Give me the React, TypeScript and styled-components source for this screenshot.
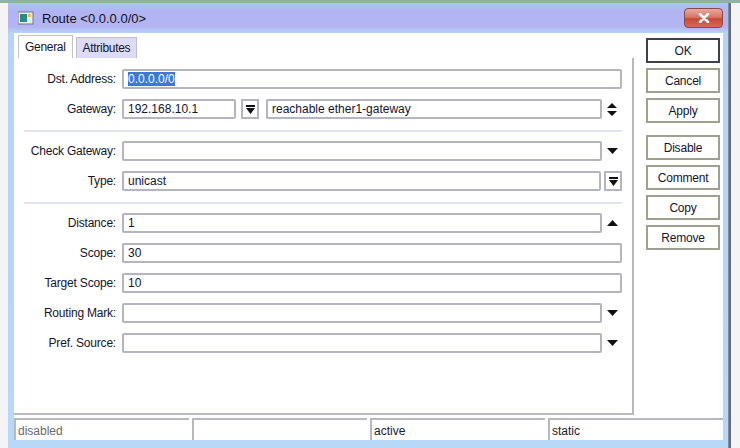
import styled, { createGlobalStyle } from "styled-components"

const Global = createGlobalStyle`
  body {
    margin: 0;
    background: #ffffff;
    font-family: "Liberation Sans", Arial, sans-serif;
    font-size: 12px;
    color: #14142a;
  }
`

const Page = styled.div`
  width: 740px;
  height: 448px;
  overflow: hidden;
  display: flex;
  flex-direction: column;
`

const TopStrip = styled.div`
  height: 3px;
  background: #8fb3a2;
`

const Desk = styled.div`
  flex: 1;
  display: flex;
`

const Side = styled.div<{ $w: number }>`
  width: ${p => p.$w}px;
  background: #f4f4f6;
  border-left: ${p => (p.$w < 9 ? "0" : "2px solid #6a6a78")};
`

const Window = styled.div`
  flex: 1;
  display: flex;
  flex-direction: column;
  background: linear-gradient(#a6c8f2 0px, #b2b4f2 8px, #b4b4f4 24px, #b6d4f6 30px, #b8d8f8 100%);
  padding: 0 5px 8px 6px;
  border-right: 1px solid #7a8aa0;
`

const TitleBar = styled.div`
  height: 30px;
  display: flex;
  align-items: center;
  gap: 8px;
  padding-left: 4px;
  font-size: 13px;
  color: #101018;
`

const Close = styled.div`
  margin-left: auto;
  margin-top: -1px;
  width: 37px;
  height: 18px;
  border-radius: 4px;
  border: 1px solid #8a4a40;
  background: linear-gradient(#e8a8a0 0%, #d87868 45%, #c84838 55%, #d86a58 100%);
  display: flex;
  align-items: center;
  justify-content: center;
`

const Client = styled.div`
  flex: 1;
  background: #ffffff;
  display: flex;
  flex-direction: column;
`

const Main = styled.div`
  flex: 1;
  display: flex;
`

const Panel = styled.div`
  width: 620px;
  display: flex;
  flex-direction: column;
`

const Tabs = styled.div`
  display: flex;
  height: 25px;
  align-items: flex-end;
  padding-left: 4px;
  gap: 3px;
`

const Tab = styled.div<{ $active?: boolean }>`
  height: ${p => (p.$active ? 22 : 20)}px;
  padding: 0 6px;
  display: flex;
  align-items: center;
  border: 1px solid #c0c0cc;
  border-bottom: 0;
  background: ${p => (p.$active ? "#ffffff" : "#dcdcf8")};
  letter-spacing: -0.3px;
`

const Body = styled.div`
  flex: 1;
  border-right: 2px solid #b8b8c4;
  border-bottom: 2px solid #b8b8c4;
  padding: 11px 10px 0 0;
  display: flex;
  flex-direction: column;
  gap: 10px;
`

const Row = styled.div`
  display: flex;
  align-items: center;
  height: 20px;
`

const Label = styled.div`
  width: 102px;
  text-align: right;
  margin-right: 6px;
  letter-spacing: -0.2px;
  white-space: nowrap;
`

const Input = styled.div<{ $w?: number }>`
  ${p => (p.$w ? `width: ${p.$w}px;` : "flex: 1;")}
  height: 20px;
  box-sizing: border-box;
  border: 2px solid #b4b4c2;
  border-radius: 2px;
  padding: 0 4px;
  display: flex;
  align-items: center;
  white-space: nowrap;
  overflow: hidden;
`

const Selected = styled.span`
  background: #3a7ad6;
  color: #ffffff;
`

const Icon = styled.div`
  width: 20px;
  display: flex;
  justify-content: center;
  align-items: center;
`

const SmallBtn = styled.div`
  width: 18px;
  height: 20px;
  box-sizing: border-box;
  border: 2px solid #b4b4c2;
  margin-left: 3px;
  display: flex;
  justify-content: center;
  align-items: center;
`

const Sep = styled.div`
  height: 2px;
  background: #e2e2f6;
  margin: 1px 0 -1px 10px;
`

const Buttons = styled.div`
  width: 74px;
  margin-left: 12px;
  padding-top: 5px;
  display: flex;
  flex-direction: column;
  gap: 5px;
`

const Button = styled.div<{ $gap?: boolean; $default?: boolean }>`
  height: 25px;
  box-sizing: border-box;
  border: 2px solid ${p => (p.$default ? "#40404a" : "#a0a090")};
  display: flex;
  align-items: center;
  justify-content: center;
  margin-top: ${p => (p.$gap ? 7 : 0)}px;
  letter-spacing: -0.2px;
  color: #151530;
`

const Status = styled.div`
  height: 22px;
  margin-top: 3px;
  display: flex;
  gap: 3px;
`

const Cell = styled.div<{ $muted?: boolean }>`
  flex: 1;
  border-top: 2px solid #b8b8c4;
  border-left: 2px solid #b8b8c4;
  padding: 1px 0 0 2px;
  display: flex;
  align-items: center;
  color: ${p => (p.$muted ? "#6a6a6a" : "#1a1a2a")};
`

const Down = () => (
  <svg width="11" height="7" viewBox="0 0 11 7">
    <path d="M0 0h11L5.5 6z" fill="#111" />
  </svg>
)

const Up = () => (
  <svg width="11" height="7" viewBox="0 0 11 7">
    <path d="M0 6h11L5.5 0z" fill="#111" />
  </svg>
)

const UpDown = () => (
  <svg width="10" height="13" viewBox="0 0 10 13">
    <path d="M0 5h10L5 0z M0 8h10L5 13z" fill="#111" />
  </svg>
)

const BarDown = () => (
  <svg width="9" height="9" viewBox="0 0 9 9">
    <path d="M0 0h9v2H0z M0 3h9L4.5 9z" fill="#111" />
  </svg>
)

const Field = ({ label, children }: { label: string; children?: React.ReactNode }) => (
  <Row>
    <Label>{label}</Label>
    {children}
  </Row>
)

const App = () => {
  return (
    <Page>
      <Global />
      <TopStrip />
      <Desk>
        <Side $w={8} />
        <Window>
          <TitleBar>
            <svg width="16" height="14" viewBox="0 0 16 14">
              <rect x="0" y="1" width="15" height="12" fill="#e8eef4" stroke="#6a7a8a" />
              <rect x="2" y="3" width="7" height="8" fill="#2a8a8a" />
              <rect x="10" y="3" width="3" height="3" fill="#f0c040" />
            </svg>
            <span>Route &lt;0.0.0.0/0&gt;</span>
            <Close>
              <svg width="12" height="10" viewBox="0 0 12 10">
                <path d="M2 1l8 8M10 1l-8 8" stroke="#ffffff" strokeWidth="2.6" strokeLinecap="round" />
              </svg>
            </Close>
          </TitleBar>
          <Client>
            <Main>
              <Panel>
                <Tabs>
                  <Tab $active>General</Tab>
                  <Tab>Attributes</Tab>
                </Tabs>
                <Body>
                  <Field label="Dst. Address:">
                    <Input><Selected>0.0.0.0/0</Selected></Input>
                  </Field>
                  <Field label="Gateway:">
                    <Input $w={114}>192.168.10.1</Input>
                    <SmallBtn style={{ marginLeft: 5 }}><BarDown /></SmallBtn>
                    <Input style={{ marginLeft: 7 }}>reachable ether1-gateway</Input>
                    <Icon><UpDown /></Icon>
                  </Field>
                  <Sep />
                  <Field label="Check Gateway:">
                    <Input />
                    <Icon><Down /></Icon>
                  </Field>
                  <Field label="Type:">
                    <Input>unicast</Input>
                    <SmallBtn><BarDown /></SmallBtn>
                  </Field>
                  <Sep />
                  <Field label="Distance:">
                    <Input>1</Input>
                    <Icon><Up /></Icon>
                  </Field>
                  <Field label="Scope:">
                    <Input>30</Input>
                  </Field>
                  <Field label="Target Scope:">
                    <Input>10</Input>
                  </Field>
                  <Field label="Routing Mark:">
                    <Input />
                    <Icon><Down /></Icon>
                  </Field>
                  <Field label="Pref. Source:">
                    <Input />
                    <Icon><Down /></Icon>
                  </Field>
                </Body>
              </Panel>
              <Buttons>
                <Button $default>OK</Button>
                <Button>Cancel</Button>
                <Button>Apply</Button>
                <Button $gap>Disable</Button>
                <Button>Comment</Button>
                <Button>Copy</Button>
                <Button>Remove</Button>
              </Buttons>
            </Main>
            <Status>
              <Cell $muted>disabled</Cell>
              <Cell />
              <Cell>active</Cell>
              <Cell>static</Cell>
            </Status>
          </Client>
        </Window>
        <Side $w={9} />
      </Desk>
    </Page>
  )
}

export default App
